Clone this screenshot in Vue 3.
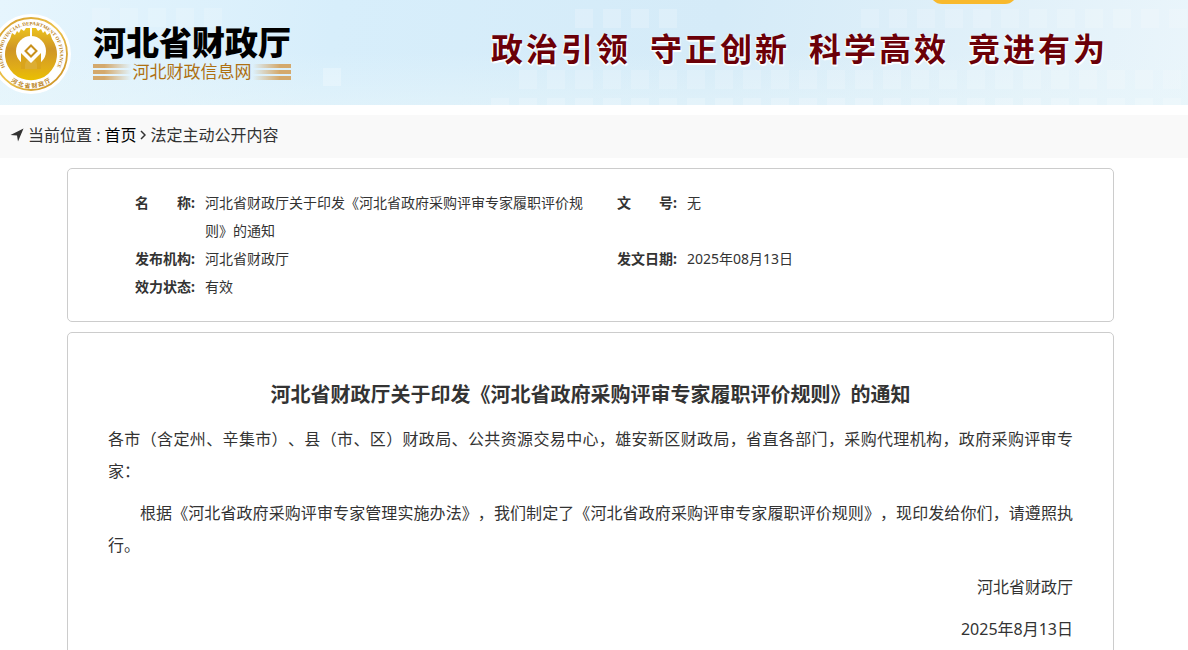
<script setup>
const squares = []
const addRow = (y, height, from, to, opacity) => {
  for (let x = from; x < to; x += 28) squares.push({ x, y, height, opacity })
}
addRow(8, 19, 92, 230, 0.15)
addRow(9, 19, 575, 665, 0.2)
addRow(9, 19, 861, 1188, 0.16)
addRow(70, 19, 519, 1188, 0.16)
addRow(98, 7, 491, 1188, 0.2)
squares.push({ x: 323, y: 68, height: 18, opacity: 0.25 })

const slogans = ['政治引领', '守正创新', '科学高效', '竞进有为']

const info = [
  { label: '名　　称:', value: '河北省财政厅关于印发《河北省政府采购评审专家履职评价规则》的通知' },
  { label: '文　　号:', value: '无' },
  { label: '发布机构:', value: '河北省财政厅' },
  { label: '发文日期:', value: '2025年08月13日' },
  { label: '效力状态:', value: '有效' },
]
</script>

<template>
  <header class="masthead">
    <svg class="tiles" aria-hidden="true">
      <rect v-for="(s, i) in squares" :key="i" :x="s.x" :y="s.y" width="18" :height="s.height" fill="#fff" :opacity="s.opacity" />
    </svg>
    <span class="tab"></span>
    <div class="brand">
      <svg class="emblem" viewBox="0 0 80 80" role="img" aria-label="河北省财政厅">
        <defs>
          <linearGradient id="ring" x1="0" y1="0" x2="1" y2="1">
            <stop offset="0" stop-color="#d29a2a" />
            <stop offset="0.5" stop-color="#ecc24a" />
            <stop offset="1" stop-color="#c58a20" />
          </linearGradient>
          <linearGradient id="disc" x1="0" y1="0" x2="0" y2="1">
            <stop offset="0" stop-color="#ecc21c" />
            <stop offset="0.4" stop-color="#cf9626" />
            <stop offset="0.75" stop-color="#e0ac18" />
            <stop offset="1" stop-color="#eac000" />
          </linearGradient>
          <path id="arc-top" d="M 14 53 A 29 29 0 1 1 66 53" />
          <path id="arc-bottom" d="M 13 60.600 A 34 34 0 0 0 67 60.600" />
        </defs>
        <circle cx="40" cy="40" r="40" fill="#fff" />
        <circle cx="40" cy="40" r="36" fill="#fff" stroke="url(#ring)" stroke-width="1.800" />
        <text class="ring-latin"><textPath href="#arc-top" startOffset="50%">HEBEI PROVINCIAL DEPARTMENT OF FINANCE</textPath></text>
        <text class="ring-cjk"><textPath href="#arc-bottom" startOffset="50%">河 北 省 财 政 厅</textPath></text>
        <path fill="url(#disc)" d="M19 25 L21 19 L24 21 L26 17 L28 19 L30 15 L33 17 L35 14 H39 V40 H41 V14 H45 L47 17 L50 15 L52 19 L54 17 L56 21 L59 19 L61 25 A26 26 0 1 1 19 25 Z" />
        <circle cx="40" cy="37" r="15" fill="#fff" />
        <path fill="#d9a41c" d="M30 55 V39 L40 49 L50 39 V55 Z" />
        <path fill="#fff" d="M34 55 V51 A6 6 0 0 1 46 51 V55 Z" opacity="0.1" />
        <path fill="#fff" stroke="#c8901c" stroke-width="2" d="M40 31.500 L45.500 37 L40 42.500 L34.500 37 Z" />
      </svg>
      <div class="names">
        <strong class="dept">河北省财政厅</strong>
        <div class="sub"><i class="bars"></i><span>河北财政信息网</span><i class="bars flip"></i></div>
      </div>
    </div>
    <p class="slogan"><span v-for="s in slogans" :key="s">{{ s }}</span></p>
  </header>

  <nav class="crumbs" aria-label="当前位置">
    <svg class="pin" viewBox="0 0 14 14" aria-hidden="true"><path d="M13.500 0.500 L8 13.500 L7 7.500 L0.500 7 Z" fill="#333" /></svg>
    <span>当前位置 :</span>
    <a href="#" class="home">首页</a>
    <svg class="chevron" viewBox="0 0 6 10" aria-hidden="true"><path d="M1 1 L5 5 L1 9" fill="none" stroke="#333" stroke-width="1.500" /></svg>
    <a href="#">法定主动公开内容</a>
  </nav>

  <main class="content">
    <dl class="card info">
      <div v-for="item in info" :key="item.label" class="item">
        <dt>{{ item.label }}</dt>
        <dd>{{ item.value }}</dd>
      </div>
    </dl>
    <article class="card article">
      <h1>河北省财政厅关于印发《河北省政府采购评审专家履职评价规则》的通知</h1>
      <p>各市（含定州、辛集市）、县（市、区）财政局、公共资源交易中心，雄安新区财政局，省直各部门，采购代理机构，政府采购评审专家：</p>
      <p class="indent">根据《河北省政府采购评审专家管理实施办法》，我们制定了《河北省政府采购评审专家履职评价规则》，现印发给你们，请遵照执行。</p>
      <p class="sign">河北省财政厅</p>
      <p class="sign">2025年8月13日</p>
    </article>
  </main>
</template>

<style>
body {
  margin: 0;
  background: #fff;
  color: #333;
  font: 16px/32px "Noto Sans", "Noto Sans CJK SC", sans-serif;
  text-spacing-trim: space-all;
}
html {
  overflow: hidden;
}
</style>

<style scoped>
.masthead {
  position: relative;
  display: flex;
  justify-content: space-between;
  align-items: flex-start;
  height: 105px;
  overflow: hidden;
  background: linear-gradient(to bottom, transparent 50%, rgba(232, 246, 250, 0.5)), linear-gradient(100deg, #e6f5fd 0%, #d7eefb 28%, #d5ebf8 60%, #e0f0f9 82%, #eaf5fb 100%);
}
.tiles {
  position: absolute;
  inset: 0;
  width: 100%;
  height: 100%;
}
.tab {
  position: absolute;
  top: -20px;
  right: 171px;
  width: 87px;
  height: 24px;
  border-radius: 12px;
  background: #f8b92d;
}
.brand {
  position: relative;
  display: flex;
  gap: 22px;
  padding-top: 14px;
  margin-left: -9px;
}
.emblem {
  width: 80px;
  height: 80px;
}
.ring-latin {
  font: bold 5px "Liberation Serif", serif;
  fill: #b98220;
  text-anchor: middle;
}
.ring-cjk {
  font: bold 6px "Noto Sans CJK SC", sans-serif;
  fill: #b98220;
  text-anchor: middle;
}
.names {
  padding-top: 10px;
}
.dept {
  display: block;
  color: #000;
  font-size: 33px;
  font-weight: 900;
  line-height: 38px;
}
.sub {
  display: flex;
  align-items: center;
  justify-content: space-between;
  color: #ae7012;
  font-size: 17px;
  line-height: 20px;
}
.bars {
  width: 38px;
  height: 16px;
  background: repeating-linear-gradient(to bottom, #d4a96c 0 4px, transparent 4px 6px);
  mask-image: linear-gradient(to right, #000 30%, transparent);
}
.flip {
  mask-image: linear-gradient(to left, #000 30%, transparent);
}
.slogan {
  position: relative;
  display: flex;
  gap: 19px;
  margin: 25px 80px 0 0;
  color: #6b0008;
  font-size: 32px;
  font-weight: 700;
  line-height: 48px;
  letter-spacing: 3px;
  text-shadow: -1px 1px 1px #fff, 1px 2px 1px #fff;
}
.crumbs {
  display: flex;
  align-items: center;
  gap: 4px;
  margin-top: 10px;
  padding: 4px 10px 7px;
  background: #f9f9f9;
}
.crumbs a {
  color: #333;
  text-decoration: none;
}
.crumbs .home {
  color: #000;
}
.pin {
  width: 14px;
  height: 14px;
}
.chevron {
  width: 6px;
  height: 10px;
}
.content {
  padding: 10px 74px 0 67px;
}
.card {
  margin: 0 0 10px;
  border: 1px solid #ccc;
  border-radius: 5px;
}
.info {
  display: grid;
  grid-template-columns: 1fr 1fr;
  padding: 20px 14px 20px 67px;
  font-size: 14px;
  line-height: 28px;
}
.item {
  display: flex;
}
dt {
  flex: 0 0 70px;
  font-weight: 700;
}
dd {
  margin: 0;
  padding-right: 24px;
}
.article {
  padding: 40px;
}
.article h1 {
  margin: 0 0 6px;
  font-size: 20px;
  line-height: 44px;
  text-align: center;
}
.article p {
  margin: 0 0 10px;
  text-align: justify;
}
.article .indent {
  text-indent: 2em;
}
.article .sign {
  text-align: right;
}
</style>
